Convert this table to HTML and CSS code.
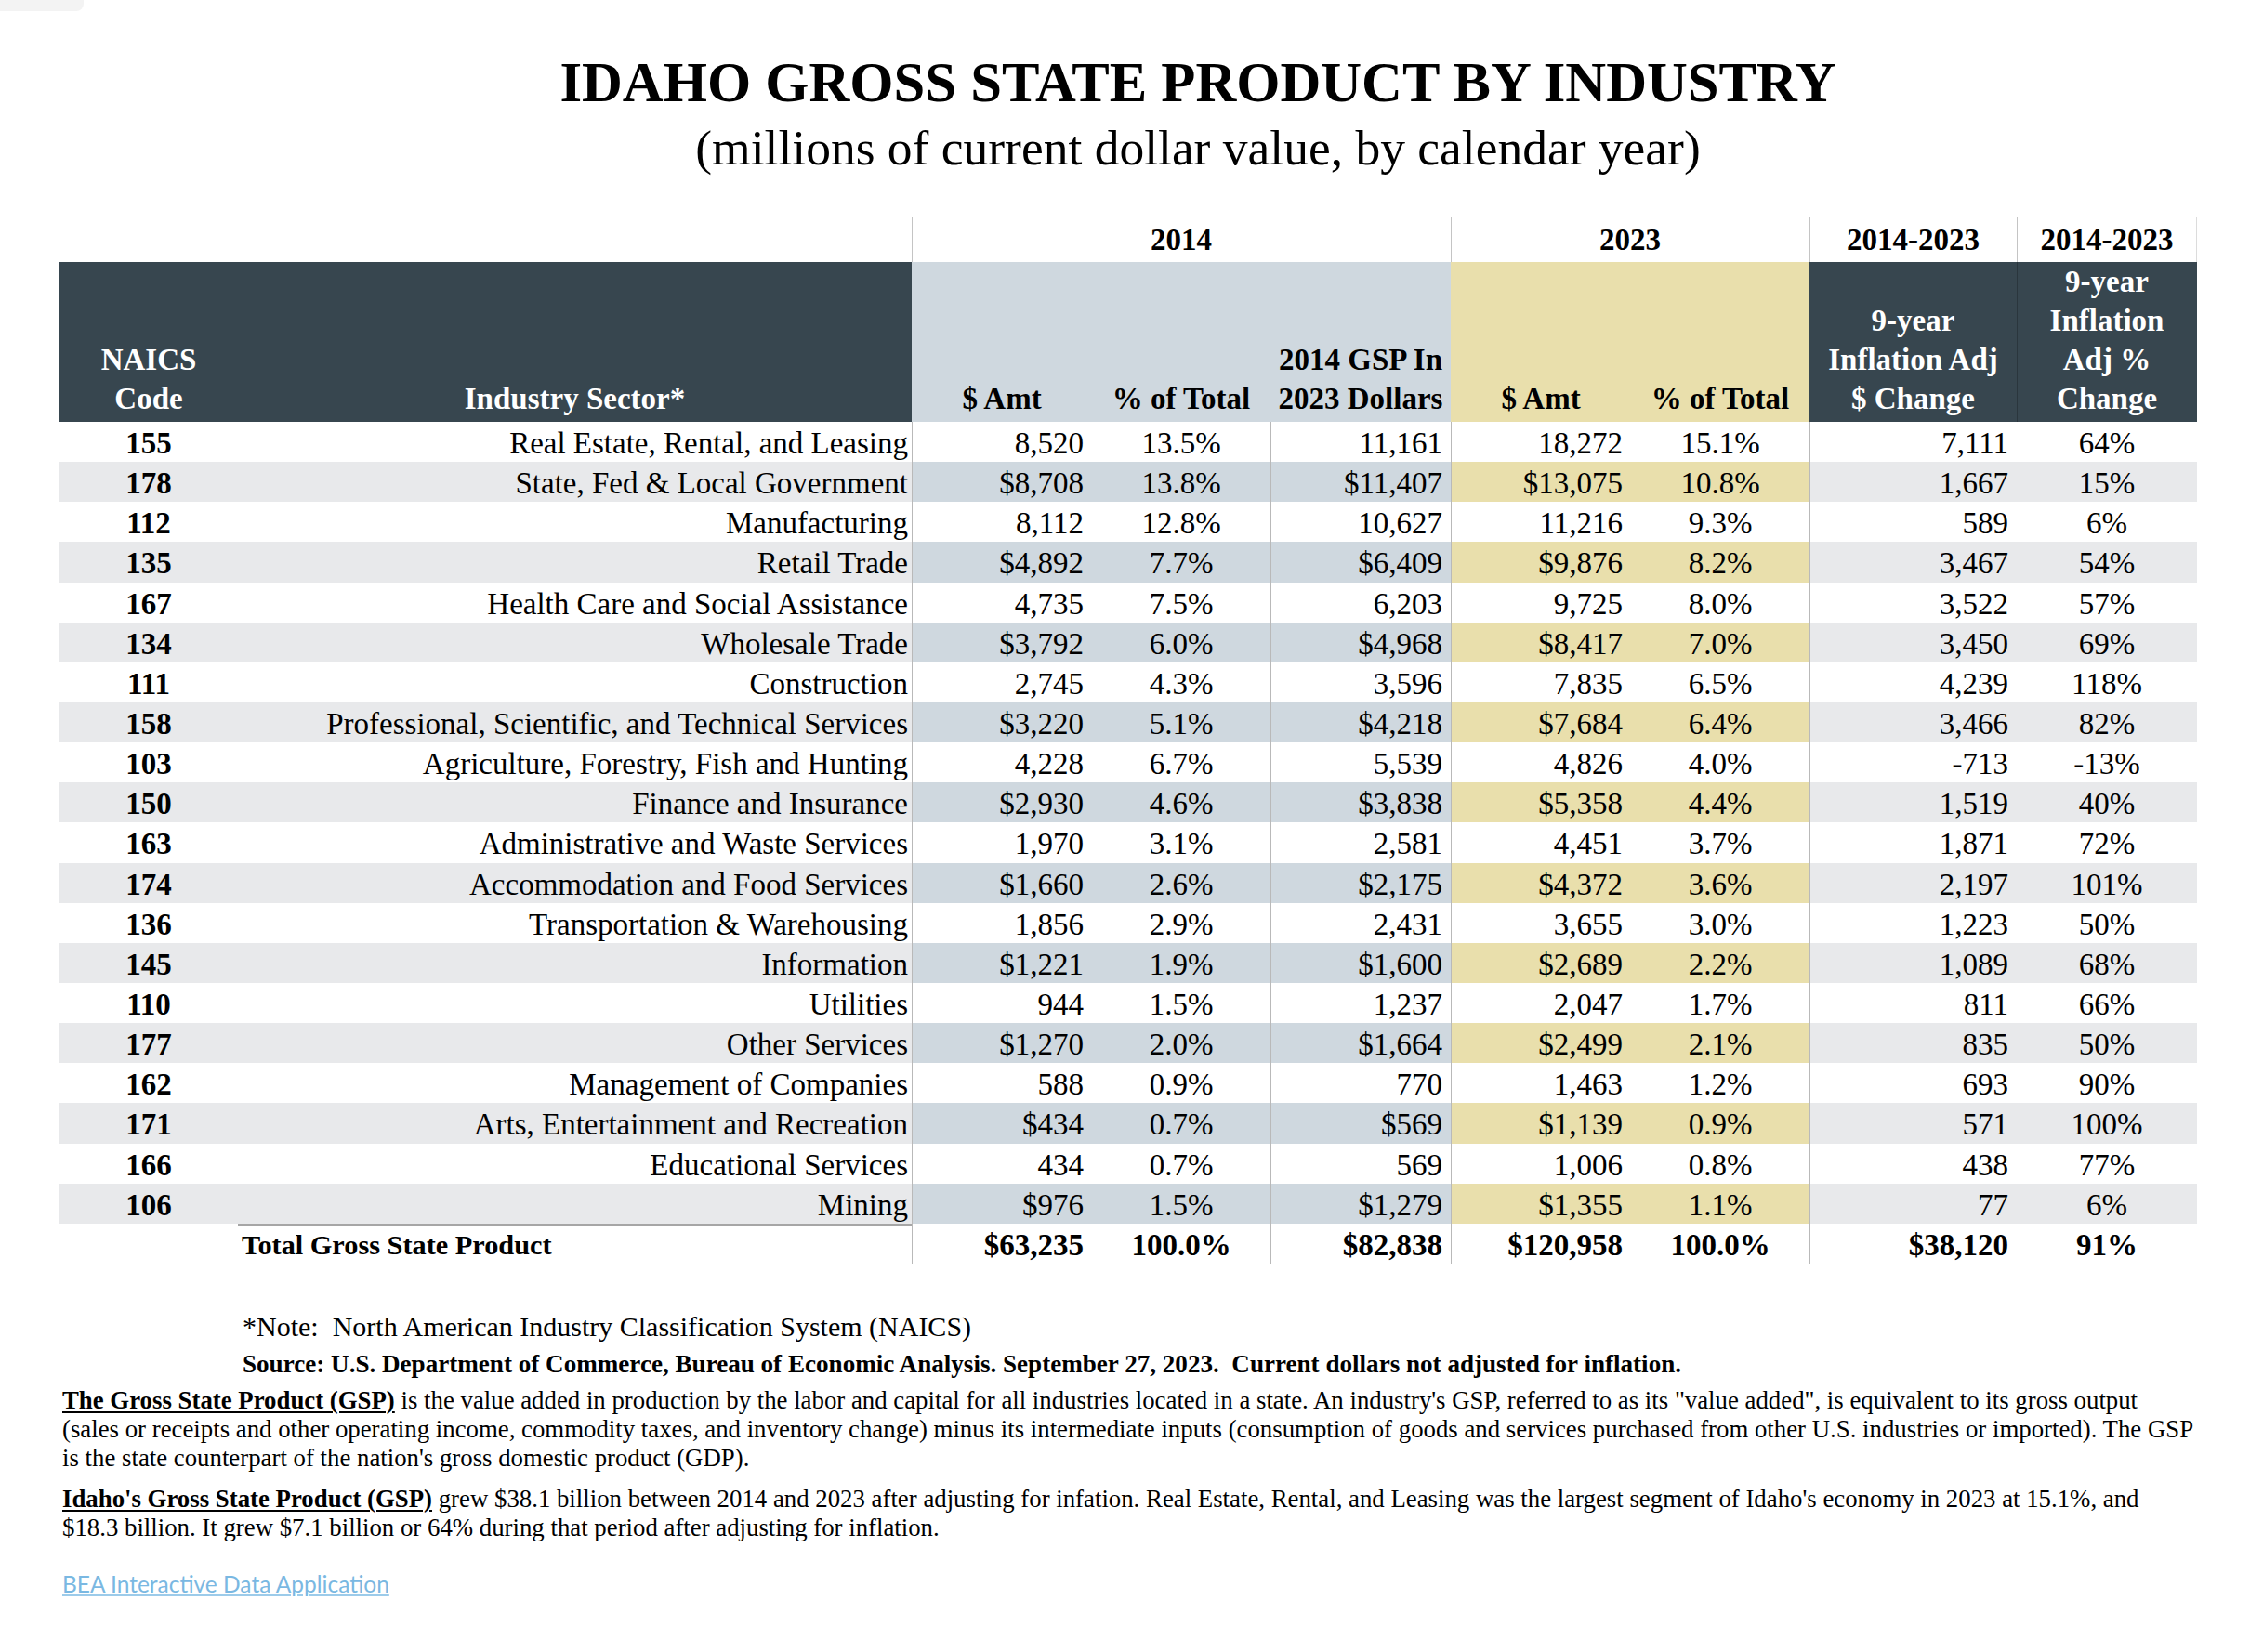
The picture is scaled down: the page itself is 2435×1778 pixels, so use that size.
FILE: index.html
```html
<!DOCTYPE html>
<html lang="en">
<head>
<meta charset="utf-8">
<title>Idaho Gross State Product by Industry</title>
<link rel="stylesheet" href="styles.css">
</head>
<body>
<div class="tab-stub"></div>
<div class="page">
  <header class="titles">
    <h1 class="title">IDAHO GROSS STATE PRODUCT BY INDUSTRY</h1>
    <p class="subtitle">(millions of current dollar value, by calendar year)</p>
  </header>

  <table class="gsp">
    <colgroup>
      <col class="c-code"><col class="c-sector"><col class="c-num"><col class="c-pct"><col class="c-num"><col class="c-num"><col class="c-pct"><col class="c-chg"><col class="c-num">
    </colgroup>
    <thead>
      <tr class="years">
        <th colspan="2"></th>
        <th colspan="3" class="vl">2014</th>
        <th colspan="2" class="vl">2023</th>
        <th class="vl">2014-2023</th>
        <th class="vl vr">2014-2023</th>
      </tr>
      <tr class="heads">
        <th class="dark">NAICS<br>Code</th>
        <th class="dark">Industry Sector*</th>
        <th class="blue">$ Amt</th>
        <th class="blue">% of Total</th>
        <th class="blue">2014 GSP In<br>2023 Dollars</th>
        <th class="yellow">$ Amt</th>
        <th class="yellow">% of Total</th>
        <th class="dark">9-year<br>Inflation Adj<br>$ Change</th>
        <th class="dark vl-dark">9-year<br>Inflation<br>Adj %<br>Change</th>
      </tr>
    </thead>
    <tbody>
      <tr><td class="code">155</td><td class="sector">Real Estate, Rental, and Leasing</td><td class="num vl">8,520</td><td class="pct">13.5%</td><td class="num vl">11,161</td><td class="num vl">18,272</td><td class="pct">15.1%</td><td class="num vl">7,111</td><td class="pct">64%</td></tr>
      <tr><td class="code">178</td><td class="sector">State, Fed &amp; Local Government</td><td class="num vl">$8,708</td><td class="pct">13.8%</td><td class="num vl">$11,407</td><td class="num vl">$13,075</td><td class="pct">10.8%</td><td class="num vl">1,667</td><td class="pct">15%</td></tr>
      <tr><td class="code">112</td><td class="sector">Manufacturing</td><td class="num vl">8,112</td><td class="pct">12.8%</td><td class="num vl">10,627</td><td class="num vl">11,216</td><td class="pct">9.3%</td><td class="num vl">589</td><td class="pct">6%</td></tr>
      <tr><td class="code">135</td><td class="sector">Retail Trade</td><td class="num vl">$4,892</td><td class="pct">7.7%</td><td class="num vl">$6,409</td><td class="num vl">$9,876</td><td class="pct">8.2%</td><td class="num vl">3,467</td><td class="pct">54%</td></tr>
      <tr><td class="code">167</td><td class="sector">Health Care and Social Assistance</td><td class="num vl">4,735</td><td class="pct">7.5%</td><td class="num vl">6,203</td><td class="num vl">9,725</td><td class="pct">8.0%</td><td class="num vl">3,522</td><td class="pct">57%</td></tr>
      <tr><td class="code">134</td><td class="sector">Wholesale Trade</td><td class="num vl">$3,792</td><td class="pct">6.0%</td><td class="num vl">$4,968</td><td class="num vl">$8,417</td><td class="pct">7.0%</td><td class="num vl">3,450</td><td class="pct">69%</td></tr>
      <tr><td class="code">111</td><td class="sector">Construction</td><td class="num vl">2,745</td><td class="pct">4.3%</td><td class="num vl">3,596</td><td class="num vl">7,835</td><td class="pct">6.5%</td><td class="num vl">4,239</td><td class="pct">118%</td></tr>
      <tr><td class="code">158</td><td class="sector">Professional, Scientific, and Technical Services</td><td class="num vl">$3,220</td><td class="pct">5.1%</td><td class="num vl">$4,218</td><td class="num vl">$7,684</td><td class="pct">6.4%</td><td class="num vl">3,466</td><td class="pct">82%</td></tr>
      <tr><td class="code">103</td><td class="sector">Agriculture, Forestry, Fish and Hunting</td><td class="num vl">4,228</td><td class="pct">6.7%</td><td class="num vl">5,539</td><td class="num vl">4,826</td><td class="pct">4.0%</td><td class="num vl">-713</td><td class="pct">-13%</td></tr>
      <tr><td class="code">150</td><td class="sector">Finance and Insurance</td><td class="num vl">$2,930</td><td class="pct">4.6%</td><td class="num vl">$3,838</td><td class="num vl">$5,358</td><td class="pct">4.4%</td><td class="num vl">1,519</td><td class="pct">40%</td></tr>
      <tr><td class="code">163</td><td class="sector">Administrative and Waste Services</td><td class="num vl">1,970</td><td class="pct">3.1%</td><td class="num vl">2,581</td><td class="num vl">4,451</td><td class="pct">3.7%</td><td class="num vl">1,871</td><td class="pct">72%</td></tr>
      <tr><td class="code">174</td><td class="sector">Accommodation and Food Services</td><td class="num vl">$1,660</td><td class="pct">2.6%</td><td class="num vl">$2,175</td><td class="num vl">$4,372</td><td class="pct">3.6%</td><td class="num vl">2,197</td><td class="pct">101%</td></tr>
      <tr><td class="code">136</td><td class="sector">Transportation &amp; Warehousing</td><td class="num vl">1,856</td><td class="pct">2.9%</td><td class="num vl">2,431</td><td class="num vl">3,655</td><td class="pct">3.0%</td><td class="num vl">1,223</td><td class="pct">50%</td></tr>
      <tr><td class="code">145</td><td class="sector">Information</td><td class="num vl">$1,221</td><td class="pct">1.9%</td><td class="num vl">$1,600</td><td class="num vl">$2,689</td><td class="pct">2.2%</td><td class="num vl">1,089</td><td class="pct">68%</td></tr>
      <tr><td class="code">110</td><td class="sector">Utilities</td><td class="num vl">944</td><td class="pct">1.5%</td><td class="num vl">1,237</td><td class="num vl">2,047</td><td class="pct">1.7%</td><td class="num vl">811</td><td class="pct">66%</td></tr>
      <tr><td class="code">177</td><td class="sector">Other Services</td><td class="num vl">$1,270</td><td class="pct">2.0%</td><td class="num vl">$1,664</td><td class="num vl">$2,499</td><td class="pct">2.1%</td><td class="num vl">835</td><td class="pct">50%</td></tr>
      <tr><td class="code">162</td><td class="sector">Management of Companies</td><td class="num vl">588</td><td class="pct">0.9%</td><td class="num vl">770</td><td class="num vl">1,463</td><td class="pct">1.2%</td><td class="num vl">693</td><td class="pct">90%</td></tr>
      <tr><td class="code">171</td><td class="sector">Arts, Entertainment and Recreation</td><td class="num vl">$434</td><td class="pct">0.7%</td><td class="num vl">$569</td><td class="num vl">$1,139</td><td class="pct">0.9%</td><td class="num vl">571</td><td class="pct">100%</td></tr>
      <tr><td class="code">166</td><td class="sector">Educational Services</td><td class="num vl">434</td><td class="pct">0.7%</td><td class="num vl">569</td><td class="num vl">1,006</td><td class="pct">0.8%</td><td class="num vl">438</td><td class="pct">77%</td></tr>
      <tr><td class="code">106</td><td class="sector">Mining</td><td class="num vl">$976</td><td class="pct">1.5%</td><td class="num vl">$1,279</td><td class="num vl">$1,355</td><td class="pct">1.1%</td><td class="num vl">77</td><td class="pct">6%</td></tr>
    </tbody>
    <tfoot>
      <tr class="total">
        <td></td>
        <td class="total-label">Total Gross State Product</td>
        <td class="num vl">$63,235</td>
        <td class="pct">100.0%</td>
        <td class="num vl">$82,838</td>
        <td class="num vl">$120,958</td>
        <td class="pct">100.0%</td>
        <td class="num vl">$38,120</td>
        <td class="pct">91%</td>
      </tr>
    </tfoot>
  </table>

  <section class="notes">
    <p class="note">*Note:&nbsp; North American Industry Classification System (NAICS)</p>
    <p class="source">Source: U.S. Department of Commerce, Bureau of Economic Analysis. September 27, 2023.&nbsp; Current dollars not adjusted for inflation.</p>
    <p class="para"><strong class="term">The Gross State Product (GSP)</strong> is the value added in production by the labor and capital for all industries located in a state. An industry's GSP, referred to as its "value added", is equivalent to its gross output (sales or receipts and other operating income, commodity taxes, and inventory change) minus its intermediate inputs (consumption of goods and services purchased from other U.S. industries or imported). The GSP is the state counterpart of the nation's gross domestic product (GDP).</p>
    <p class="para para-2"><strong class="term">Idaho's Gross State Product (GSP)</strong> grew $38.1 billion between 2014 and 2023 after adjusting for infation. Real Estate, Rental, and Leasing was the largest segment of Idaho's economy in 2023 at 15.1%, and $18.3 billion. It grew $7.1 billion or 64% during that period after adjusting for inflation.</p>
    <a class="bea-link" href="#">BEA Interactive Data Application</a>
  </section>
</div>
</body>
</html>
```

FILE: styles.css
```css
* {
  box-sizing: border-box;
}

body {
  margin: 0;
  background: #ffffff;
  color: #000000;
  font-family: "Liberation Serif", "Times New Roman", serif;
}

.tab-stub {
  position: absolute;
  left: 0;
  top: 0;
  width: 90px;
  height: 12px;
  background: #f3f3f3;
  border-radius: 0 0 8px 0;
}

.page {
  padding: 59px 71px 40px 64px;
}

/* ---------- titles ---------- */
.titles {
  padding-left: 150px;
  text-align: center;
}

.title {
  margin: 0;
  font-size: 60.7px;
  line-height: 60px;
  font-weight: bold;
}

.subtitle {
  margin: 14px 0 0;
  font-size: 53.5px;
  line-height: 53px;
}

/* ---------- table ---------- */
.gsp {
  margin-top: 48px;
  width: 2300px;
  border-collapse: collapse;
  table-layout: fixed;
  font-size: 33px;
}

.c-code { width: 192px; }
.c-sector { width: 725px; }
.c-num { width: 194px; }
.c-pct { width: 192px; }
.c-chg { width: 223px; }

.gsp th,
.gsp td {
  padding: 0;
  white-space: nowrap;
}

.years th {
  height: 48px;
  line-height: 48px;
  font-weight: bold;
  text-align: center;
  vertical-align: middle;
}

.years th.vl {
  box-shadow: inset 1px 0 0 #c4c4c4;
}

.years th.vr {
  box-shadow: inset 1px 0 0 #c4c4c4, inset -1px 0 0 #dcdcdc;
}

.heads th {
  height: 172px;
  line-height: 42px;
  padding-bottom: 4px;
  vertical-align: bottom;
  text-align: center;
  font-weight: bold;
}

.heads .dark {
  background: #37464f;
  color: #ffffff;
}

.heads .vl-dark {
  box-shadow: inset 1px 0 0 #2a363d;
}

.heads .blue {
  background: #cfd8df;
}

.heads .yellow {
  background: #e9dfac;
}

.gsp tbody td,
.gsp tfoot td {
  height: 43.15px;
  line-height: 40px;
  padding-top: 3px;
  vertical-align: top;
}

.gsp .code {
  text-align: center;
  font-weight: bold;
}

.gsp .sector {
  text-align: right;
  padding-right: 4px;
}

.gsp .num {
  text-align: right;
  padding-right: 9px;
}

.gsp .pct {
  text-align: center;
}

.gsp td.vl {
  box-shadow: inset 1px 0 0 #b9b9b9;
}

.gsp tbody tr:nth-child(even) td {
  background: #e8e9eb;
}

.gsp tbody tr:nth-child(even) td:nth-child(3),
.gsp tbody tr:nth-child(even) td:nth-child(4),
.gsp tbody tr:nth-child(even) td:nth-child(5) {
  background: #cfd8df;
}

.gsp tbody tr:nth-child(even) td:nth-child(6),
.gsp tbody tr:nth-child(even) td:nth-child(7) {
  background: #e9dfac;
}

.gsp tbody tr:nth-child(even) td:nth-child(8),
.gsp tbody tr:nth-child(even) td:nth-child(9) {
  background: #e8e9eb;
}

.total td {
  font-weight: bold;
}

.total .total-label {
  text-align: left;
  padding-left: 4px;
  font-size: 30.3px;
  box-shadow: inset 0 2px 0 #a6a6a6;
}

/* ---------- notes ---------- */
.notes {
  margin-top: 47px;
}

.note {
  margin: 0;
  padding-left: 197px;
  font-size: 30px;
  line-height: 41px;
}

.source {
  margin: 0;
  padding-left: 197px;
  font-size: 27.1px;
  line-height: 41px;
  font-weight: bold;
}

.para {
  margin: 3px 0 0;
  padding-left: 3px;
  font-size: 26.8px;
  line-height: 31px;
}

.para-2 {
  margin-top: 13px;
}

.term {
  text-decoration: underline;
  text-decoration-thickness: 2px;
  text-underline-offset: 3px;
}

.bea-link {
  display: inline-block;
  margin-top: 30px;
  margin-left: 3px;
  font-family: Lato, "Open Sans", sans-serif;
  font-size: 24.5px;
  line-height: 30px;
  color: #7ab8e2;
  text-decoration: underline;
  text-decoration-color: #9ccbea;
}
```
